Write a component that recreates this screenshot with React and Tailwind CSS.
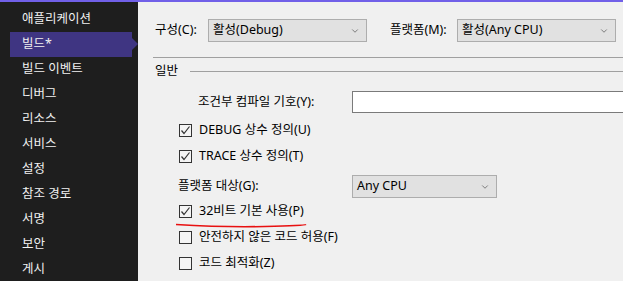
import { ChevronDown } from "lucide-react";

const font = { fontFamily: '"Noto Sans", "Noto Sans CJK KR", sans-serif' };

const navItems = [
  "애플리케이션",
  "빌드*",
  "빌드 이벤트",
  "디버그",
  "리소스",
  "서비스",
  "설정",
  "참조 경로",
  "서명",
  "보안",
  "게시",
];

const Select = ({ value, className }) => (
  <div
    className={`flex items-center justify-between h-[23px] bg-[#e1e1e1] border border-[#adadad] pl-[4px] pr-[6px] text-[12.5px] text-black ${className}`}
  >
    <span>{value}</span>
    <ChevronDown className="w-[10px] h-[10px] text-[#404040]" strokeWidth={1.5} />
  </div>
);

const CheckBox = ({ checked }) => (
  <div className="w-[13px] h-[13px] border border-[#333333] bg-[#f4f4f4] flex items-center justify-center shrink-0">
    {checked && (
      <svg width="11" height="11" viewBox="0 0 11 11">
        <polyline
          points="1.5,5.5 4,8.5 9.5,1.5"
          fill="none"
          stroke="#333333"
          strokeWidth="1.2"
        />
      </svg>
    )}
  </div>
);

const CheckRow = ({ checked, label, children }) => (
  <div className="relative flex items-center h-[26px] pl-[41px] gap-[7px]">
    <CheckBox checked={checked} />
    <span className="text-[12.5px] text-black">{label}</span>
    {children}
  </div>
);

export default function App() {
  return (
    <div className="w-[623px] h-[281px] overflow-hidden flex flex-col bg-[#f0f0f0]" style={font}>
      <div className="h-[2px] bg-[#7160e8] shrink-0" />
      <div className="flex flex-1 min-h-0">
        {/* sidebar */}
        <nav className="w-[138px] shrink-0 bg-[#1e1e1e] pt-[5px]">
          {navItems.map((item, i) => (
            <div
              key={item}
              className={`relative ml-[10px] w-[122px] h-[25px] flex items-center pl-[12px] text-[12.5px] text-[#f1f1f1] ${
                i === 1 ? "bg-[#3f3582]" : ""
              }`}
            >
              {item}
              {i === 1 && (
                <div className="absolute right-[-6px] top-[6px] w-0 h-0 border-y-[6px] border-y-transparent border-l-[6px] border-l-[#3f3582]" />
              )}
            </div>
          ))}
        </nav>

        {/* main */}
        <main className="flex-1 pt-[17px]">
          <div className="flex items-center h-[23px] pl-[17px]">
            <span className="w-[53px] text-[12.5px] text-black">구성(C):</span>
            <Select value="활성(Debug)" className="w-[159px]" />
            <span className="ml-[23px] w-[67px] text-[12.5px] text-black">플랫폼(M):</span>
            <Select value="활성(Any CPU)" className="w-[159px]" />
          </div>

          <div className="mt-[15px] ml-[15px] h-px bg-[#a0a0a0]" />

          <div className="mt-[3px] h-[20px] flex items-center pl-[17px]">
            <span className="w-[35px] text-[12.5px] text-black">일반</span>
            <div className="flex-1 h-px bg-[#a0a0a0]" />
          </div>

          <div className="mt-[10px] h-[22px] flex items-center pl-[60px]">
            <span className="w-[154px] text-[12.5px] text-black">조건부 컴파일 기호(Y):</span>
            <div className="flex-1 h-[22px] bg-white border border-[#7a7a7a] border-r-0" />
          </div>

          <div className="mt-[4px]">
            <CheckRow checked label="DEBUG 상수 정의(U)" />
            <CheckRow checked label="TRACE 상수 정의(T)" />
          </div>

          <div className="mt-[6px] h-[23px] flex items-center pl-[40px]">
            <span className="w-[174px] text-[12.5px] text-black">플랫폼 대상(G):</span>
            <Select value="Any CPU" className="w-[145px]" />
          </div>

          <CheckRow checked label="32비트 기본 사용(P)">
            <svg
              className="absolute left-[37px] top-[25px]"
              width="132"
              height="6"
              viewBox="0 0 132 6"
            >
              <path d="M1 1.5 Q 50 4.5 90 3.5 T 131 1.5" fill="none" stroke="#e81010" strokeWidth="1.6" />
            </svg>
          </CheckRow>
          <CheckRow label="안전하지 않은 코드 허용(F)" />
          <CheckRow label="코드 최적화(Z)" />
        </main>
      </div>
    </div>
  );
}
